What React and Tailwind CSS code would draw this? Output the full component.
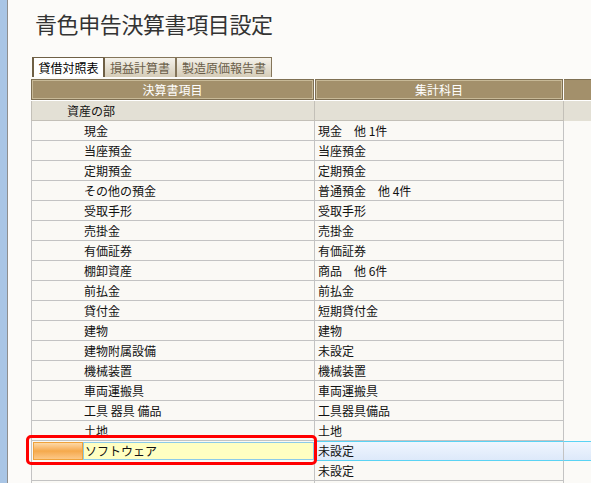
import React from "react";

const rows = [
  { a: "現金", b: "現金　他 1件" },
  { a: "当座預金", b: "当座預金" },
  { a: "定期預金", b: "定期預金" },
  { a: "その他の預金", b: "普通預金　他 4件" },
  { a: "受取手形", b: "受取手形" },
  { a: "売掛金", b: "売掛金" },
  { a: "有価証券", b: "有価証券" },
  { a: "棚卸資産", b: "商品　他 6件" },
  { a: "前払金", b: "前払金" },
  { a: "貸付金", b: "短期貸付金" },
  { a: "建物", b: "建物" },
  { a: "建物附属設備", b: "未設定" },
  { a: "機械装置", b: "機械装置" },
  { a: "車両運搬具", b: "車両運搬具" },
  { a: "工具 器具 備品", b: "工具器具備品" },
  { a: "土地", b: "土地" },
];

const font = { fontFamily: '"Noto Sans CJK JP", "Noto Sans", sans-serif' };

export default function App() {
  return (
    <div className="w-[591px] h-[483px] overflow-hidden bg-[#fcfbf9] flex" style={font}>
      <div className="w-[8px] shrink-0 bg-[#a9c5e5] border-r border-[#8e8e8e]" />
      <div className="flex-1 min-w-0 flex flex-col">
        <div className="shrink-0 h-[57px] pl-[27px] pt-[11px] text-[22px] leading-[24px] tracking-[-0.4px] text-[#333333]">
          青色申告決算書項目設定
        </div>
        <div className="shrink-0 h-[20px] flex pl-[24px] text-[12px] leading-[18px]">
          <div className="w-[72px] bg-white border-t border-r border-l-2 border-[#6f6046] text-black flex items-center justify-center">
            貸借対照表
          </div>
          <div className="w-[72px] bg-gradient-to-b from-[#f5f2eb] to-[#d5ccb8] border border-b-0 border-[#84755a] border-l-[#6f6046] text-[#6a5e4a] flex items-center justify-center">
            損益計算書
          </div>
          <div className="w-[96px] bg-gradient-to-b from-[#f5f2eb] to-[#d5ccb8] border border-b-0 border-[#84755a] text-[#6a5e4a] flex items-center justify-center">
            製造原価報告書
          </div>
        </div>
        <div className="shrink-0 ml-[23px] mt-[2px] w-[620px] text-[12px]">
          <div className="grid grid-cols-[283px_249px_1fr] h-[22px] border-b border-white">
            <div className="bg-[#a3906b] border border-[#7f7053] shadow-[inset_0_0_0_1px_#c7b997] text-white flex items-center justify-center leading-none">
              決算書項目
            </div>
            <div className="border-l border-white">
              <div className="h-full bg-[#a3906b] border border-[#7f7053] shadow-[inset_0_0_0_1px_#c7b997] text-white flex items-center justify-center leading-none">
                集計科目
              </div>
            </div>
            <div className="border-l border-white">
              <div className="h-full bg-[#a3906b] border-t border-[#7f7053]" />
            </div>
          </div>
          <div className="grid grid-cols-[283px_249px_1fr] h-[20px] bg-[#e3e0d5] text-[#111]">
            <div className="border-l border-b border-[#c3c0b8] pl-[35px] leading-[19px]">資産の部</div>
            <div className="border-l border-b border-[#c3c0b8]" />
            <div className="border-l border-[#c3c0b8]" />
          </div>
          {rows.map((r) => (
            <div key={r.a} className="grid grid-cols-[283px_249px_1fr] h-[20px] bg-[#faf9f5] text-[#111]">
              <div className="border-l border-b border-[#c3c3c3] pl-[52px] leading-[19px] whitespace-pre">{r.a}</div>
              <div className="border-l border-b border-[#c3c3c3] pl-[3px] leading-[19px] whitespace-pre">{r.b}</div>
              <div className="border-l border-[#c3c3c3] bg-[#fbfaf7]" />
            </div>
          ))}
          <div className="relative grid grid-cols-[283px_249px_1fr] h-[20px] text-[#111]">
            <div className="flex border-l border-[#c3c3c3] bg-[#faf9f5] pt-[1px] pb-[1px] pl-[1px]">
              <div className="w-[50px] border border-[#f0a23a] bg-gradient-to-b from-[#fdd9a6] via-[#f5a94b] to-[#fcc886]" />
              <div className="flex-1 border border-[#8ccbe9] bg-[#ffffc2] pl-[1px] leading-[16px]">ソフトウェア</div>
            </div>
            <div className="border-l border-[#c3c3c3] border-y border-y-[#5ad3f4] bg-gradient-to-b from-[#f0f6fe] to-[#dde9fa] pl-[3px] leading-[18px]">
              未設定
            </div>
            <div className="border-l border-[#c3c3c3] border-y border-y-[#5ad3f4] bg-gradient-to-b from-[#f0f6fe] to-[#dde9fa]" />
            <div className="absolute left-[-5px] top-[-6px] w-[291px] h-[30px] border-[3px] border-[#ff0000] rounded-[5px] pointer-events-none" />
          </div>
          <div className="grid grid-cols-[283px_249px_1fr] h-[20px] bg-[#faf9f5] text-[#111]">
            <div className="border-l border-b border-[#c3c3c3]" />
            <div className="border-l border-b border-[#c3c3c3] pl-[3px] leading-[19px]">未設定</div>
            <div className="border-l border-[#c3c3c3] bg-[#fbfaf7]" />
          </div>
          <div className="grid grid-cols-[283px_249px_1fr] h-[20px] bg-[#faf9f5]">
            <div className="border-l border-b border-[#c3c3c3]" />
            <div className="border-l border-b border-[#c3c3c3]" />
            <div className="border-l border-[#c3c3c3] bg-[#fbfaf7]" />
          </div>
        </div>
      </div>
    </div>
  );
}
